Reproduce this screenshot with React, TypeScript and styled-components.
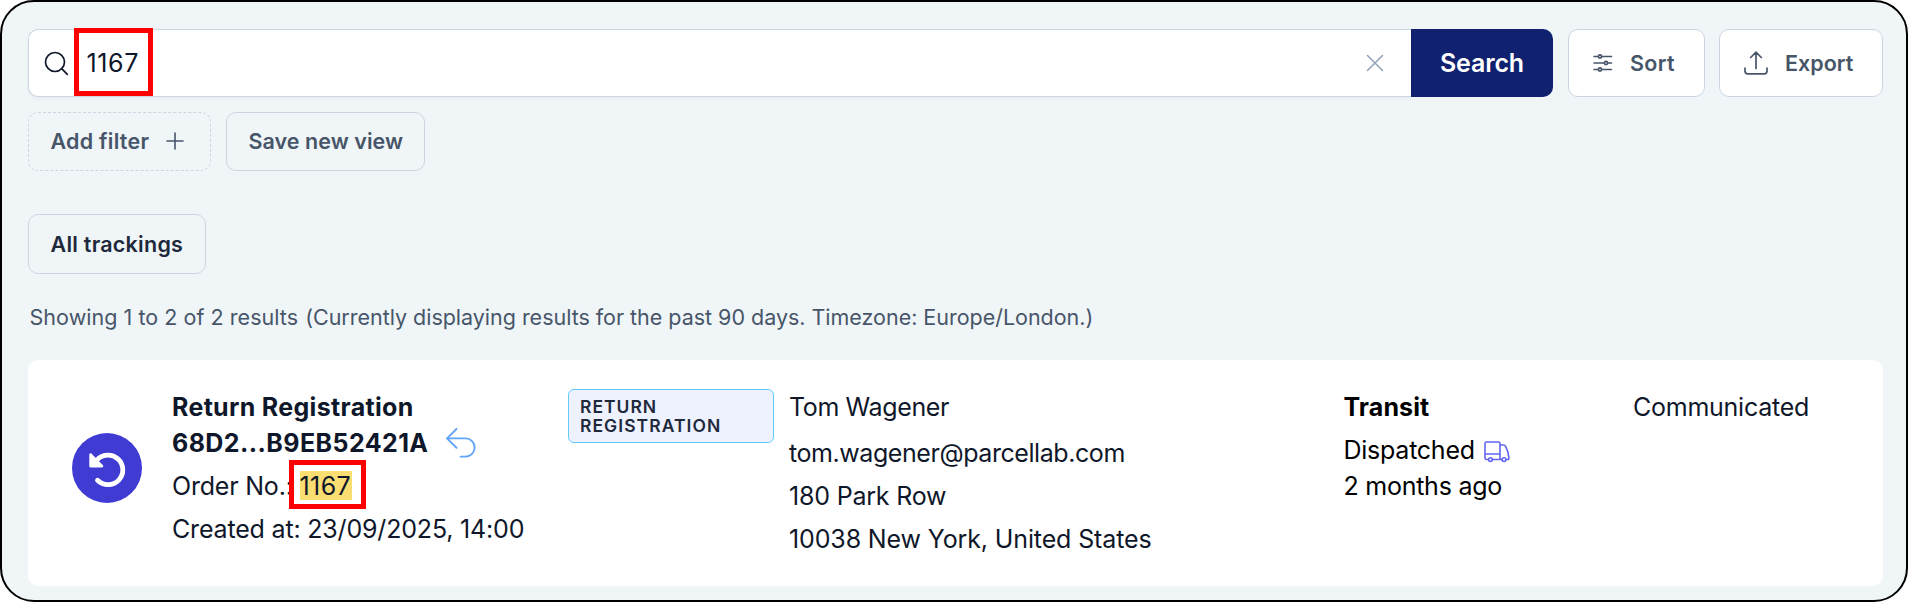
import React from "react";
import styled, { createGlobalStyle, css } from "styled-components";

const GlobalStyle = createGlobalStyle`
  *, *::before, *::after { box-sizing: border-box; }
  html, body { margin: 0; padding: 0; background: #fff; }
  body { font-family: Inter, "Liberation Sans", sans-serif; color: #0f172a; }
  svg { display: block; flex: none; }
`;

const Frame = styled.main`
  width: 1908px;
  height: 602px;
  padding: 27px 23px 0 26px;
  border: 2px solid #000;
  border-radius: 34px;
  background: #f0f5f8;
  overflow: hidden;
  display: flex;
  flex-direction: column;
`;

const Toolbar = styled.div`
  display: flex;
  height: 68px;
`;

const SearchGroup = styled.div`
  display: flex;
  width: 1525px;
  margin-right: 15px;
`;

const SearchField = styled.label`
  flex: 1;
  display: flex;
  align-items: center;
  padding: 0 27px 0 15px;
  background: #fff;
  border: 1px solid #cbd5e1;
  border-right-width: 0;
  border-radius: 10px 0 0 10px;
  box-shadow: 0 2px 4px rgba(15, 23, 42, 0.04);
`;

const Query = styled.span`
  position: relative;
  flex: 1;
  margin-left: 17.5px;
  font-size: 25px;
  line-height: 32px;
  letter-spacing: 0.6px;
`;

const Marker = styled.span<{ $w: number; $h: number; $x: number; $y: number }>`
  position: absolute;
  left: ${(p) => p.$x}px;
  top: ${(p) => p.$y}px;
  width: ${(p) => p.$w}px;
  height: ${(p) => p.$h}px;
  border: 5px solid #fe0000;
  pointer-events: none;
`;

const SearchButton = styled.button`
  width: 142px;
  border: 0;
  padding: 0;
  border-radius: 0 10px 10px 0;
  background: #102170;
  color: #fff;
  font: 600 25px/32px Inter, sans-serif;
  letter-spacing: -0.15px;
`;

const Button = styled.button<{ $w: number; $h?: number; $variant?: "solid" | "dashed" | "dark" }>`
  display: flex;
  align-items: center;
  width: ${(p) => p.$w}px;
  height: ${(p) => p.$h ?? 59}px;
  padding: 0 0 1px 21.5px;
  border: 1px ${(p) => (p.$variant === "dashed" ? "dashed" : "solid")} #cbd5e1;
  border-radius: 10px;
  background: transparent;
  color: #475569;
  font: 600 21.5px/28px Inter, sans-serif;
  white-space: nowrap;
  ${(p) =>
    p.$variant === "solid" &&
    css`
      padding: 0 0 0 24px;
      background: #fff;
    `}
  ${(p) =>
    p.$variant === "dark" &&
    css`
      padding-bottom: 0;
      color: #1e293b;
    `}
`;

const Label = styled.span<{ $track?: number; $ml?: number; $drop?: number }>`
  letter-spacing: ${(p) => p.$track ?? 0}px;
  margin-left: ${(p) => p.$ml ?? 0}px;
  padding-top: ${(p) => p.$drop ?? 0}px;
`;

const Row = styled.div<{ $top: number; $gap?: number }>`
  display: flex;
  margin-top: ${(p) => p.$top}px;
  gap: ${(p) => p.$gap ?? 0}px;
`;

const Summary = styled.p`
  margin: 28px 0 0 1.5px;
  font-size: 21.5px;
  line-height: 30px;
  color: #475569;
  white-space: nowrap;
`;

const Card = styled.article`
  display: flex;
  margin-top: 28px;
  height: 226px;
  border-radius: 10px;
  background: #fff;
`;

const StatusColumn = styled.div`
  width: 144px;
  padding: 72px 0 0 43px;
`;

const Column = styled.section<{ $w?: number; $ink?: string }>`
  width: ${(p) => p.$w ?? 200}px;
  flex: none;
  padding-top: 29px;
  color: ${(p) => p.$ink ?? "#0f172a"};
`;

const Line = styled.div<{ $top?: number; $bold?: boolean }>`
  display: flex;
  position: relative;
  margin-top: ${(p) => p.$top ?? 0}px;
  height: 36px;
  font-size: 25px;
  line-height: 36px;
  font-weight: ${(p) => (p.$bold ? 700 : 400)};
  white-space: pre;
`;

const Highlight = styled.mark`
  position: relative;
  width: 52px;
  height: 29px;
  margin-top: 3px;
  line-height: 30px;
  letter-spacing: 0.4px;
  color: inherit;
  background: #fade72;
`;

const Tag = styled.div`
  display: flex;
  flex-direction: column;
  width: 206px;
  height: 54px;
  padding: 7px 11px;
  border: 1px solid #60cdf8;
  border-radius: 6px;
  background: #eef2ff;
  color: #1e293b;
  font-size: 17.5px;
  line-height: 19px;
  font-weight: 600;
`;

const stroke = { fill: "none", stroke: "currentColor", strokeLinecap: "round", strokeLinejoin: "round" } as const;

const SearchIcon = () => (
  <svg width="25" height="25" viewBox="0 0 25 25" {...stroke} strokeWidth="1.7">
    <circle cx="11" cy="11" r="9.5" />
    <path d="m17.700 17.700 5.600 5.600" />
  </svg>
);

const CloseIcon = () => (
  <svg width="18" height="18" viewBox="0 0 18 18" {...stroke} stroke="#94a3b8" strokeWidth="1.6">
    <path d="m1.5 1.5 15 15m0-15-15 15" />
  </svg>
);

const PlusIcon = () => (
  <svg width="18" height="18" viewBox="0 0 18 18" {...stroke} strokeWidth="1.6">
    <path d="M9 1v16M1 9h16" />
  </svg>
);

const SlidersIcon = () => (
  <svg width="20" height="20" viewBox="0 0 20 20" {...stroke} strokeWidth="1.6">
    <path d="M1 3.500h4.400M8.600 3.500H18.500M1 10h10.400M14.600 10h3.900M1 16.500h4.400M8.600 16.500H18.500" />
    <circle cx="7" cy="3.5" r="1.6" />
    <circle cx="13" cy="10" r="1.6" />
    <circle cx="7" cy="16.5" r="1.6" />
  </svg>
);

const UploadIcon = () => (
  <svg width="24" height="24" viewBox="0 0 24 24" {...stroke} strokeWidth="1.7">
    <path d="M12 17.500V1.200M6.700 6.500 12 1.200l5.300 5.300M1 17v3a2.800 2.800 0 0 0 2.800 2.800h16.400A2.800 2.800 0 0 0 23 20v-3" />
  </svg>
);

const ReturnBadge = () => (
  <svg width="72" height="72" viewBox="0 0 72 72" fill="none">
    <circle cx="36" cy="36" r="35" fill="#3f3bd3" />
    <path d="M25.700 28.300A14.800 14.800 0 1 1 26.500 48.300" stroke="#fff" strokeWidth="4.800" strokeLinecap="round" />
    <path d="M18.300 22.800v11.100a1.500 1.500 0 0 0 1.500 1.500h11c1.500 0 2-1.500 1-2.500L20.600 21.800c-1-.9-2.300-.4-2.300 1z" fill="#fff" />
  </svg>
);

const UndoIcon = () => (
  <svg width="30" height="30" viewBox="0 0 30 30" {...stroke} stroke="#60a5fa" strokeWidth="1.9">
    <path d="M10.500 1 1 10.400l9.500 9.400M1 10.400h18.600a9.100 9.100 0 0 1 0 18.200h-5" />
  </svg>
);

const TruckIcon = () => (
  <svg width="26" height="22" viewBox="0 0 26 22" {...stroke} stroke="#6366f1" strokeWidth="1.6">
    <path d="M3.700 18.500H2.500A1.500 1.500 0 0 1 1 17V2.500A1.500 1.500 0 0 1 2.500 1h12A1.500 1.500 0 0 1 16 2.500v16M8.300 18.500h9.400M1 13h15M16 4h3.500c1 0 1.600.5 2.100 1.400 1.900 3.500 3 7.400 3.300 11.600.1 1-.4 1.500-1.300 1.500h-1.200" />
    <circle cx="6.500" cy="18.600" r="1.900" />
    <circle cx="20" cy="18.600" r="1.900" />
  </svg>
);

export default function App() {
  return (
    <>
      <GlobalStyle />
      <Frame>
        <Toolbar>
          <SearchGroup>
            <SearchField>
              <SearchIcon />
              <Query>
                1167
                <Marker $w={79} $h={68} $x={-12.5} $y={-19} />
              </Query>
              <CloseIcon />
            </SearchField>
            <SearchButton>Search</SearchButton>
          </SearchGroup>
          <Row $top={0} $gap={14}>
            <Button $w={137} $h={68} $variant="solid">
              <SlidersIcon />
              <Label $ml={17} $track={0.3}>Sort</Label>
            </Button>
            <Button $w={164} $h={68} $variant="solid">
              <UploadIcon />
              <Label $ml={17}>Export</Label>
            </Button>
          </Row>
        </Toolbar>
        <Row $top={15} $gap={15}>
          <Button $w={183} $variant="dashed">
            <Label $track={0.25}>Add filter</Label>
            <Label $ml={17}><PlusIcon /></Label>
          </Button>
          <Button $w={199}><Label $track={0.05}>Save new view</Label></Button>
        </Row>
        <Row $top={43}>
          <Button $w={178} $h={60} $variant="dark"><Label $track={0.25}>All trackings</Label></Button>
        </Row>
        <Summary>
          <Label $track={0.04}>Showing 1 to 2 of 2 results</Label>
          <Label $ml={7} $track={-0.02}>(Currently displaying results for the past 90 days. Timezone: Europe/London.)</Label>
        </Summary>
        <Card>
          <StatusColumn><ReturnBadge /></StatusColumn>
          <Column $w={396}>
            <Line $bold><Label $track={0.32}>Return Registration</Label></Line>
            <Line $bold>
              <Label $track={0.42}>68D2...B9EB52421A</Label>
              <Label $ml={18} $drop={3}><UndoIcon /></Label>
            </Line>
            <Line $top={7}>
              <Label $track={-0.2}>Order No.: </Label>
              <Highlight>1167<Marker $w={77} $h={49} $x={-11} $y={-11} /></Highlight>
            </Line>
            <Line $top={7}><Label $track={-0.18}>Created at: 23/09/2025, 14:00</Label></Line>
          </Column>
          <Column $w={221}>
            <Tag>
              <Label $track={1}>RETURN</Label>
              <Label $track={1.05}>REGISTRATION</Label>
            </Tag>
          </Column>
          <Column $w={554.5}>
            <Line><Label $track={-0.38}>Tom Wagener</Label></Line>
            <Line $top={10}><Label $track={-0.43}>tom.wagener@parcellab.com</Label></Line>
            <Line $top={7}><Label $track={-0.2}>180 Park Row</Label></Line>
            <Line $top={7}><Label $track={-0.13}>10038 New York, United States</Label></Line>
          </Column>
          <Column $w={289.5} $ink="#000">
            <Line $bold><Label $track={0.1}>Transit</Label></Line>
            <Line $top={7}>
              <Label $track={-0.25}>Dispatched</Label>
              <Label $ml={9} $drop={9}><TruckIcon /></Label>
            </Line>
            <Line><Label $track={-0.25}>2 months ago</Label></Line>
          </Column>
          <Column>
            <Line><Label $track={-0.25}>Communicated</Label></Line>
          </Column>
        </Card>
      </Frame>
    </>
  );
}
